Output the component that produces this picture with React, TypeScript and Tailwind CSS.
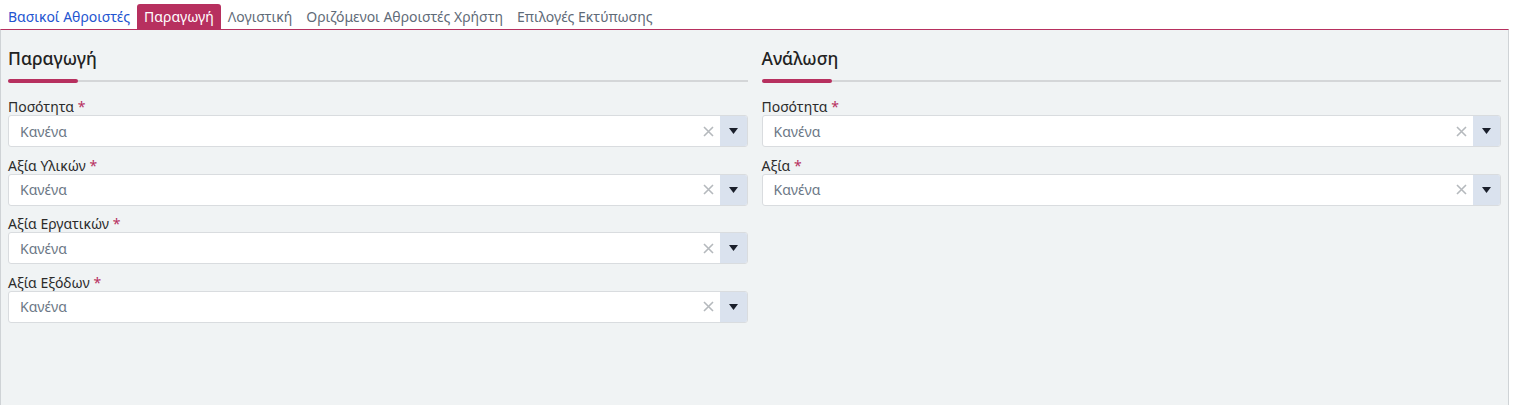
import * as React from "react";

const tabs = [
  { title: "Βασικοί Αθροιστές", state: "link" },
  { title: "Παραγωγή", state: "active" },
  { title: "Λογιστική", state: "idle" },
  { title: "Οριζόμενοι Αθροιστές Χρήστη", state: "idle" },
  { title: "Επιλογές Εκτύπωσης", state: "idle" },
];

const sections = [
  { title: "Παραγωγή", fields: ["Ποσότητα", "Αξία Υλικών", "Αξία Εργατικών", "Αξία Εξόδων"] },
  { title: "Ανάλωση", fields: ["Ποσότητα", "Αξία"] },
];

function SelectField({ label }: { label: string }) {
  return (
    <div className="flex flex-col">
      <label className="text-[14px] leading-[16px] text-[#2b2b2b]">
        {label} <span className="text-[#b7305f]">*</span>
      </label>
      <div className="flex h-[32px] rounded-[3px] border border-[#d9dcdf] bg-white overflow-hidden">
        <div className="flex-1 flex items-center pl-[11px] text-[14px] text-[#6b7785]">Κανένα</div>
        <div className="flex items-center pr-[6px] text-[#b5b9bd]">
          <svg width="11" height="11" viewBox="0 0 11 11">
            <path d="M1 1 L10 10 M10 1 L1 10" stroke="currentColor" strokeWidth="1.6" />
          </svg>
        </div>
        <div className="w-[27px] flex items-center justify-center bg-[#dae2ee]">
          <svg width="9" height="6" viewBox="0 0 9 6">
            <path d="M0 0 H9 L4.5 6 Z" fill="#1a1f2b" />
          </svg>
        </div>
      </div>
    </div>
  );
}

export default function App() {
  return (
    <div className="w-[1522px] h-[405px] bg-white overflow-hidden" style={{ fontFamily: '"Noto Sans", "Open Sans", sans-serif' }}>
      <div className="flex items-end h-[29px] pl-[1px]">
        {tabs.map((t) => (
          <div
            key={t.title}
            className={
              t.state === "active"
                ? "h-[25px] px-[7px] flex items-center rounded-t-[3px] bg-[#b7305f] text-white text-[14px]"
                : t.state === "link"
                ? "h-[25px] px-[7px] flex items-center text-[#2354d0] text-[14px]"
                : "h-[25px] px-[7px] flex items-center text-[#5f6b78] text-[14px]"
            }
          >
            {t.title}
          </div>
        ))}
      </div>
      <div className="w-[1509px] h-[376px] bg-[#f0f3f4] border-t border-t-[#b7305f] border-l border-r border-l-[#cfd3d6] border-r-[#cfd3d6] flex gap-[14px] pl-[7px] pr-[7px]">
        {sections.map((s) => (
          <div key={s.title} className="flex-1 flex flex-col">
            <h2 className="mt-[15px] text-[17.5px] leading-[26px] text-[#222] font-medium">{s.title}</h2>
            <div className="relative mt-[9px] h-[2px] bg-[#d4d6d8]">
              <div className="absolute left-0 top-[-1px] h-[4px] w-[70px] rounded-full bg-[#b7305f]" />
            </div>
            <div className="mt-[17px] flex flex-col gap-[10.5px]">
              {s.fields.map((f) => (
                <SelectField key={f} label={f} />
              ))}
            </div>
          </div>
        ))}
      </div>
    </div>
  );
}
